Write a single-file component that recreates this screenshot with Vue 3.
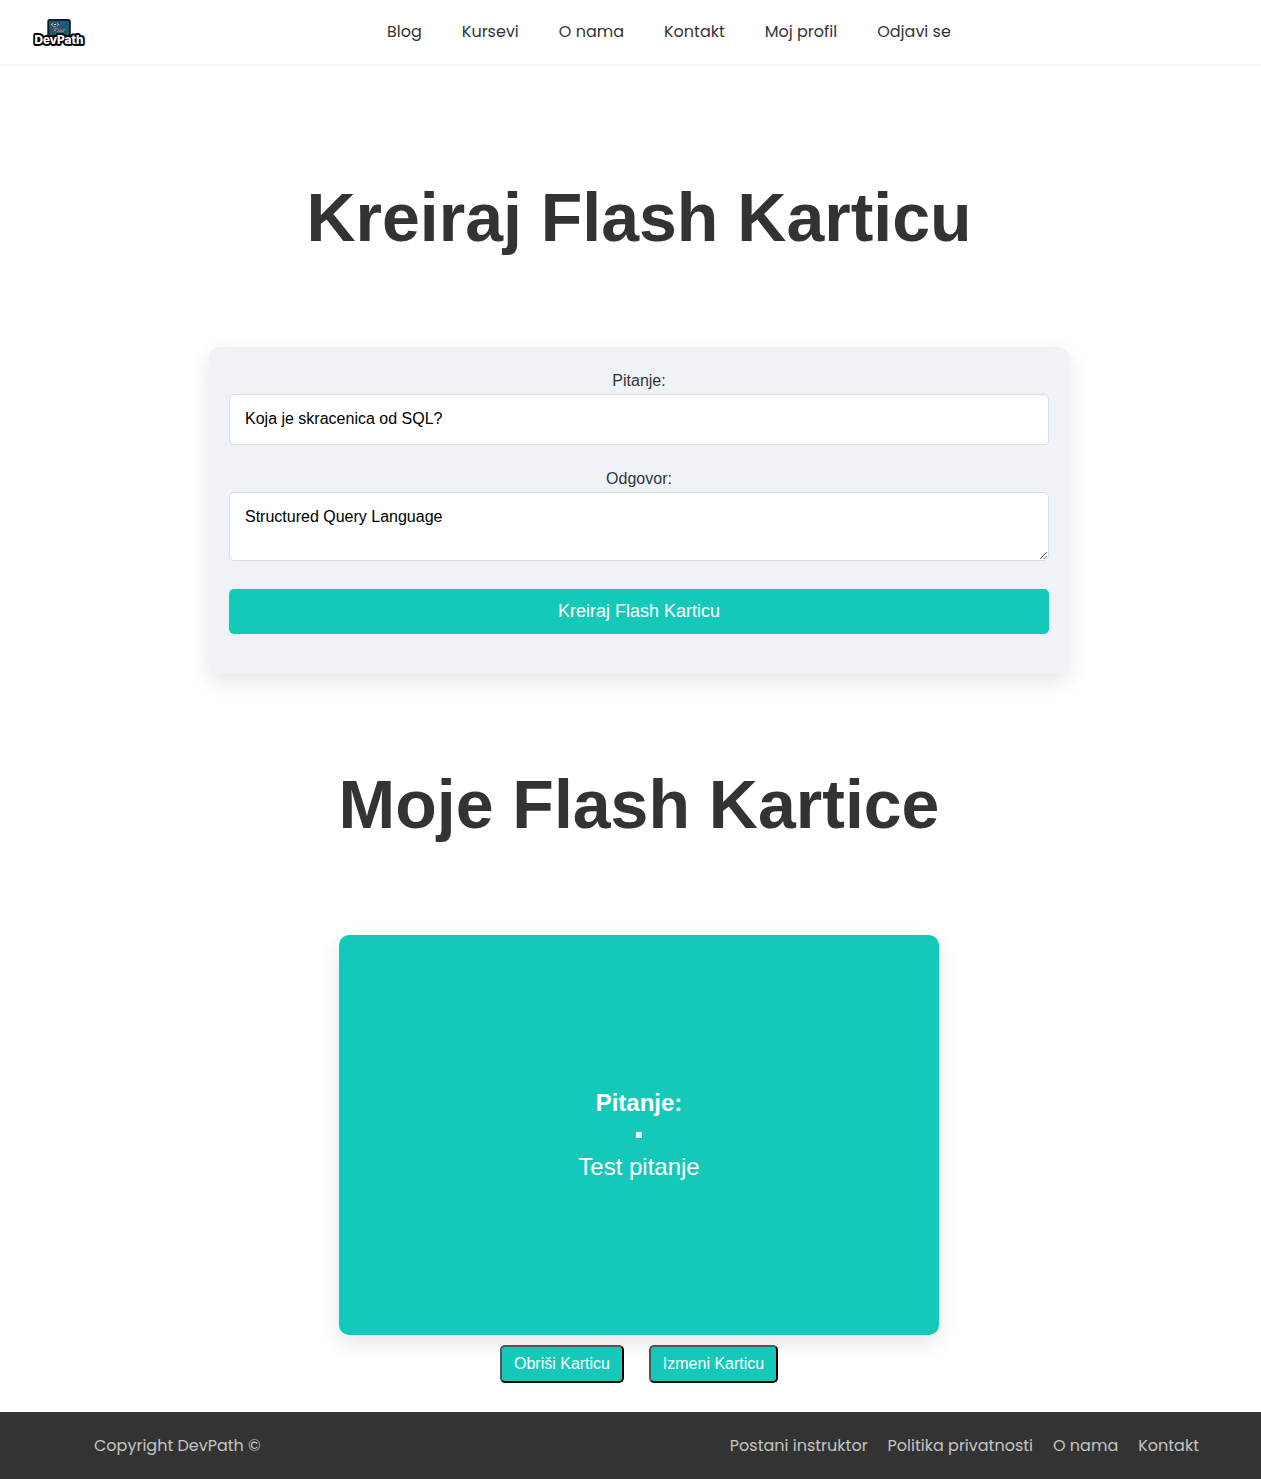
<script setup>
import { ref } from 'vue'

const question = ref('Koja je skracenica od SQL?')
const answer = ref('Structured Query Language')

const navLinks = ['Blog', 'Kursevi', 'O nama', 'Kontakt', 'Moj profil', 'Odjavi se']
const footerLinks = ['Postani instruktor', 'Politika privatnosti', 'O nama', 'Kontakt']
</script>

<template>
  <div class="page">
    <header class="header">
      <svg class="logo" width="54" height="30" viewBox="0 0 54 30">
        <rect x="15.3" y="1" width="23.5" height="21" rx="2.5" fill="#101820" />
        <rect x="17.2" y="2.8" width="19.8" height="16.5" rx=".8" fill="#205b74" />
        <path d="M20.7 5.5l-1.3 1l1.3 1M25.3 5.5l1.3 1l-1.3 1M22.2 6.5h1.8" stroke="#d7e5e8" stroke-width="1" fill="none" />
        <path d="M21 8.8h2.5M22 12.2h2" stroke="#d4ad4b" />
        <path d="M22.5 10.6h4M26 12.2h6" stroke="#c9605c" />
        <path d="M25 13.7h7M31.5 11.6h2" stroke="#4a9da8" />
        <text x="27" y="25.7" text-anchor="middle" textLength="49" lengthAdjust="spacingAndGlyphs" class="logo-text">DevPath</text>
      </svg>
      <nav class="nav">
        <a v-for="label in navLinks" :key="label" class="link">{{ label }}</a>
      </nav>
    </header>

    <main class="main">
      <h1 class="title">Kreiraj Flash Karticu</h1>
      <form class="form" @submit.prevent>
        <label for="question">Pitanje:</label>
        <input id="question" v-model="question" type="text" />
        <label for="answer">Odgovor:</label>
        <textarea id="answer" v-model="answer" spellcheck="false"></textarea>
        <button class="submit" type="submit">Kreiraj Flash Karticu</button>
      </form>

      <h1 class="title second">Moje Flash Kartice</h1>
      <section class="card">
        <strong>Pitanje:</strong>
        <i class="dot"></i>
        <span>Test pitanje</span>
      </section>
      <div class="actions">
        <button class="action delete">Obriši Karticu</button>
        <button class="action edit">Izmeni Karticu</button>
      </div>
    </main>

    <footer class="footer">
      <div class="link">Copyright DevPath ©</div>
      <nav class="footer-nav">
        <a v-for="label in footerLinks" :key="label" class="link">{{ label }}</a>
      </nav>
    </footer>
  </div>
</template>

<style>
body { margin: 0; background: #fff; }
</style>

<style scoped>
* { box-sizing: border-box; }
.page {
  display: flex;
  flex-direction: column;
  height: 1479px;
  overflow: hidden;
  color: #333;
  font: 16px/24px "Liberation Sans", Arial, sans-serif;
}
.header {
  display: flex;
  flex: none;
  align-items: center;
  height: 66px;
  padding: 0 32px;
  border-bottom: 2px solid #f7f7f7;
}
.logo { flex: none; display: block; margin-top: 1px; }
.logo-text {
  font: 800 11.5px Inter, sans-serif;
  fill: #fff;
  stroke: #050505;
  stroke-width: 3.8px;
  stroke-linejoin: round;
  paint-order: stroke;
}
.nav { display: flex; gap: 40px; margin-left: 301px; }
.link {
  display: block;
  font: 400 16px/24px Poppins, Inter, sans-serif;
  white-space: nowrap;
}
.main {
  display: flex;
  flex: none;
  flex-direction: column;
  align-items: center;
  height: 1346px;
  padding-left: 17px;
}
.title {
  margin: 111px 0 0;
  font-size: 68px;
  line-height: 80px;
  white-space: nowrap;
}
.form {
  display: flex;
  flex: none;
  flex-direction: column;
  width: 860px;
  height: 327px;
  margin-top: 90px;
  padding: 20px;
  border-radius: 10px;
  background: #eff3f8;
  box-shadow: 0 8px 20px rgba(0, 0, 0, .1);
  text-align: center;
}
label { height: 27px; line-height: 27px; }
input, textarea {
  display: block;
  width: 100%;
  padding: 15px;
  border: 1px solid #ddd;
  border-radius: 5px;
  background: #fff;
  color: #000;
  font: 16px/18px "Liberation Sans", Arial, sans-serif;
  outline: none;
}
input { height: 51px; margin: 0 0 20px; padding: 14px 15px 16px; }
textarea { height: 69px; margin: 0 0 28px; resize: vertical; }
.submit {
  height: 45px;
  padding: 0;
  border: 0;
  border-radius: 5px;
  background: #15c9ba;
  color: #fff;
  font: 18px "Liberation Sans", Arial, sans-serif;
}
.second { margin-top: 90px; }
.card {
  display: flex;
  flex: none;
  flex-direction: column;
  align-items: center;
  justify-content: center;
  width: 600px;
  height: 400px;
  margin-top: 91px;
  border-radius: 10px;
  background: #15c9ba;
  box-shadow: 0 8px 20px rgba(0, 0, 0, .1);
  color: #fff;
  font-size: 24px;
  line-height: 36px;
}
.dot { width: 6px; height: 6px; margin: 11px 0; background: #fff; }
.actions { display: flex; gap: 25px; margin-top: 10px; }
.action {
  height: 38px;
  padding: 0;
  border: 2px outset #000;
  border-radius: 5px;
  background: #15c9ba;
  color: #fff;
  font: 16px "Liberation Sans", Arial, sans-serif;
}
.delete { width: 124px; }
.edit { width: 129px; }
.footer {
  display: flex;
  flex: none;
  align-items: center;
  justify-content: space-between;
  height: 67px;
  padding: 0 62px 0 94px;
  background: #333;
  color: #c4c4c4;
}
.footer-nav { display: flex; gap: 20px; }
</style>
